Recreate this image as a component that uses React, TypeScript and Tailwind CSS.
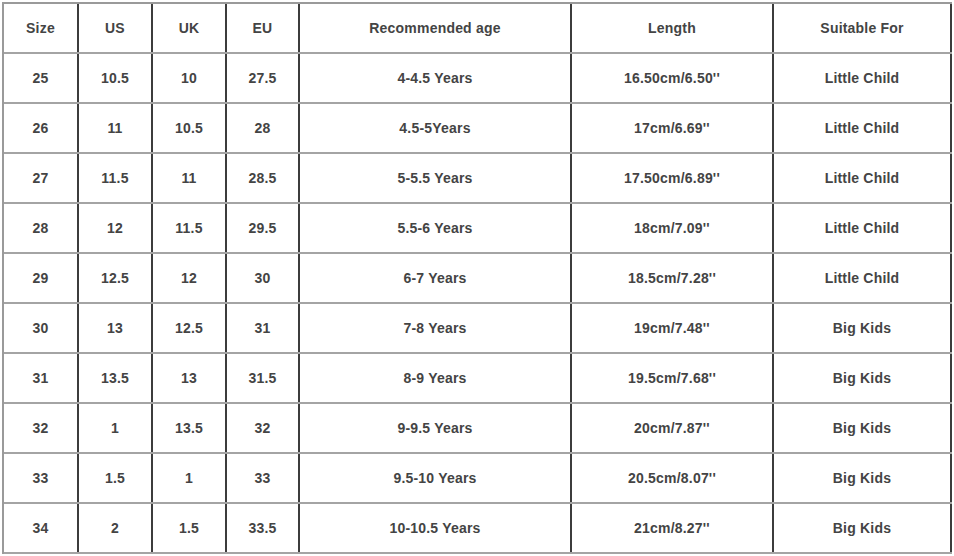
import React from "react";

const widths = ["w-[75px]", "w-[74px]", "w-[74px]", "w-[73px]", "w-[272px]", "w-[202px]", "w-[178px]"];

const header = ["Size", "US", "UK", "EU", "Recommended age", "Length", "Suitable For"];

const rows: string[][] = [
  ["25", "10.5", "10", "27.5", "4-4.5 Years", "16.50cm/6.50''", "Little Child"],
  ["26", "11", "10.5", "28", "4.5-5Years", "17cm/6.69''", "Little Child"],
  ["27", "11.5", "11", "28.5", "5-5.5 Years", "17.50cm/6.89''", "Little Child"],
  ["28", "12", "11.5", "29.5", "5.5-6 Years", "18cm/7.09''", "Little Child"],
  ["29", "12.5", "12", "30", "6-7 Years", "18.5cm/7.28''", "Little Child"],
  ["30", "13", "12.5", "31", "7-8 Years", "19cm/7.48''", "Big Kids"],
  ["31", "13.5", "13", "31.5", "8-9 Years", "19.5cm/7.68''", "Big Kids"],
  ["32", "1", "13.5", "32", "9-9.5 Years", "20cm/7.87''", "Big Kids"],
  ["33", "1.5", "1", "33", "9.5-10 Years", "20.5cm/8.07''", "Big Kids"],
  ["34", "2", "1.5", "33.5", "10-10.5 Years", "21cm/8.27''", "Big Kids"],
];

function Row({ cells }: { cells: string[] }) {
  return (
    <div className="flex h-[50px] border-b-2 border-[#a4a4a4]">
      {cells.map((c, i) => (
        <div
          key={i}
          className={`${widths[i]} flex items-center justify-center border-r-2 border-[#3c3c3c] text-[14px] font-bold tracking-[0.2px] text-[#444444]`}
        >
          {c}
        </div>
      ))}
    </div>
  );
}

export default function App() {
  return (
    <div className="w-[954px] h-[556px] bg-white" style={{ fontFamily: '"Liberation Sans", Arial, sans-serif' }}>
      <div className="ml-[2px] pt-[2px]">
        <div className="inline-flex flex-col border-l-2 border-t-2 border-[#9a9a9a]">
          <Row cells={header} />
          {rows.map((r, i) => (
            <Row key={i} cells={r} />
          ))}
        </div>
      </div>
    </div>
  );
}
